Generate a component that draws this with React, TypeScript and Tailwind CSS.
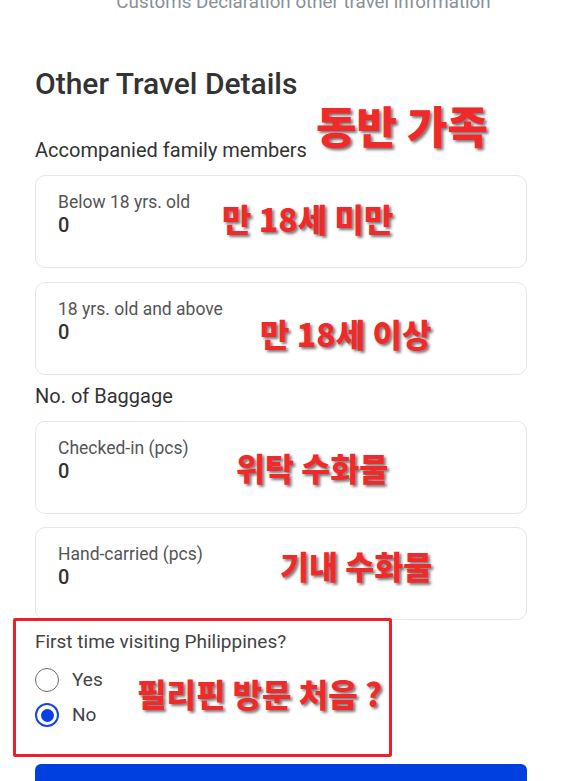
const ui = '[font-family:Roboto,"Noto_Sans",sans-serif]';

function Note({ text, className }: { text: string; className: string }) {
  return (
    <span
      className={`absolute leading-none font-black whitespace-nowrap text-[#f02a2a] [font-family:"Noto_Sans_CJK_KR",sans-serif] [text-shadow:2px_2px_3px_rgba(0,0,0,0.55)] ${className}`}
    >
      {text}
    </span>
  );
}

function CountField({ label, value }: { label: string; value: string }) {
  return (
    <div className="h-[93px] rounded-[10px] border border-[#e6e6e6] bg-white pl-[22px] pt-[16px]">
      <div className="text-[17.5px] leading-[21px] text-[#555]">{label}</div>
      <div className="text-[20px] leading-[24px] font-medium text-[#333]">{value}</div>
    </div>
  );
}

function Radio({ label, checked }: { label: string; checked?: boolean }) {
  return (
    <div className="flex items-center h-[24px] gap-[13px]">
      {checked ? (
        <span className="w-[24px] h-[24px] rounded-full border-[2px] border-[#1746d8] flex items-center justify-center">
          <span className="w-[13px] h-[13px] rounded-full bg-[#0a3fe0]" />
        </span>
      ) : (
        <span className="w-[24px] h-[24px] rounded-full border-[1.5px] border-[#6b6b6b]" />
      )}
      <span className="text-[19px] text-[#444]">{label}</span>
    </div>
  );
}

export default function App() {
  return (
    <div className={`relative w-[570px] h-[781px] overflow-hidden bg-white ${ui}`}>
      <div className="-mt-[10px] h-[24px] text-[18.75px] leading-[24px] text-[#8a8f98] text-center pl-[37px]">
        Customs Declaration other travel information
      </div>

      <div className="px-[35px]">
        <h1 className="mt-[54px] text-[30px] leading-[32px] font-medium text-[#333]">Other Travel Details</h1>

        <div className="mt-[38px] text-[20px] leading-[24px] text-[#333]">Accompanied family members</div>

        <div className="mt-[13px] flex flex-col gap-[14px] w-[492px]">
          <CountField label="Below 18 yrs. old" value="0" />
          <CountField label="18 yrs. old and above" value="0" />
        </div>

        <div className="mt-[9px] text-[20px] leading-[24px] text-[#333]">No. of Baggage</div>

        <div className="mt-[13px] flex flex-col gap-[13px] w-[492px]">
          <CountField label="Checked-in (pcs)" value="0" />
          <CountField label="Hand-carried (pcs)" value="0" />
        </div>

        <div className="mt-[10px] text-[19px] leading-[24px] text-[#444]">First time visiting Philippines?</div>
        <div className="mt-[14px] flex flex-col gap-[11px]">
          <Radio label="Yes" />
          <Radio label="No" checked />
        </div>

        <div className="mt-[37px] w-[492px] h-[40px] rounded-t-[6px] bg-[#0040e0]" />
      </div>

      {/* annotations */}
      <div className="absolute left-[13px] top-[618px] w-[379px] h-[139px] border-[3px] border-[#ee1f2a] rounded-[2px]" />
      <Note text="동반 가족" className="left-[316px] top-[103px] text-[44px]" />
      <Note text="만 18세 미만" className="left-[222px] top-[202px] text-[32px]" />
      <Note text="만 18세 이상" className="left-[260px] top-[317px] text-[32px]" />
      <Note text="위탁 수화물" className="left-[236px] top-[452px] text-[31.5px]" />
      <Note text="기내 수화물" className="left-[280px] top-[550px] text-[31.5px]" />
      <Note text="필리핀 방문 처음 ?" className="left-[137px] top-[677px] text-[32px]" />
    </div>
  );
}
